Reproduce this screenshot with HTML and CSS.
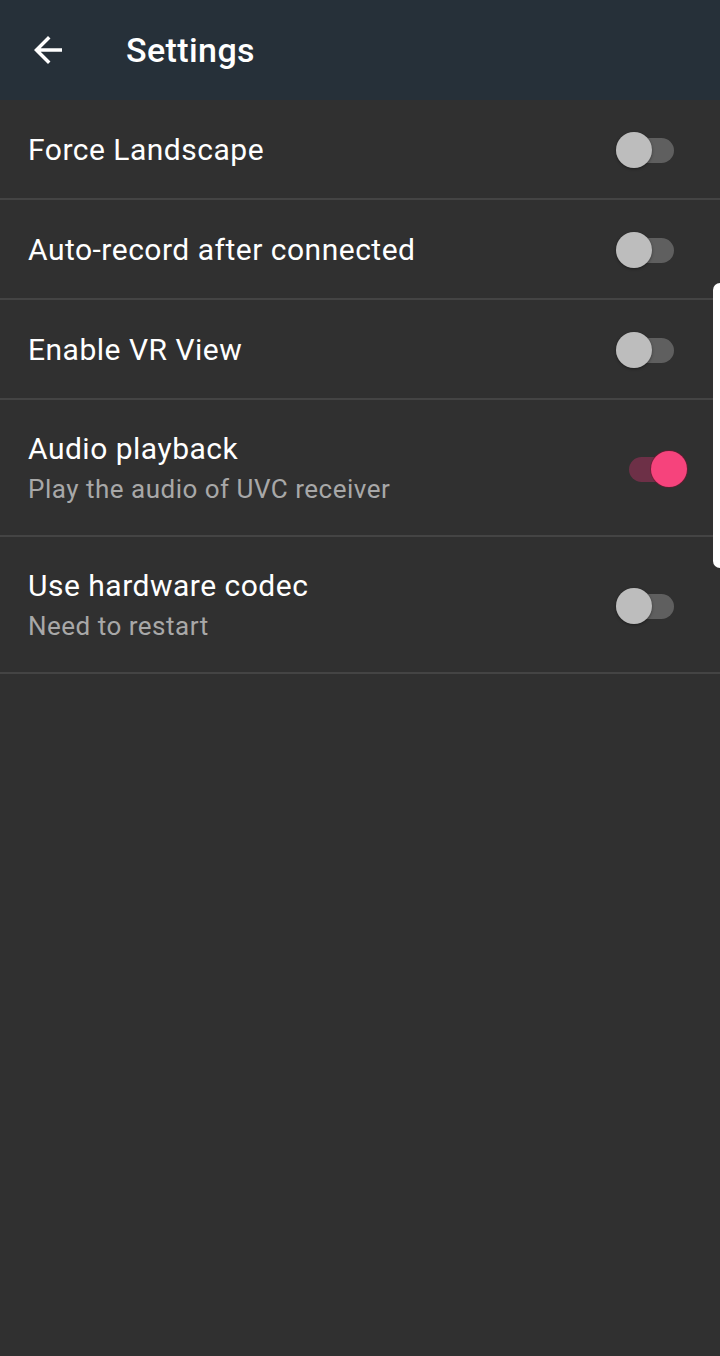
FILE: index.html
```html
<!DOCTYPE html>
<html lang="en">
<head>
    <meta charset="UTF-8">
    <meta name="viewport" content="width=device-width, initial-scale=1.0">
    <title>Settings</title>
    <link rel="stylesheet" href="styles.css">
</head>
<body>
    <header class="toolbar">
        <button class="back" aria-label="Back">
            <svg viewBox="0 0 24 24" width="42" height="42">
                <path d="M20 11H7.83l5.59-5.59L12 4l-8 8 8 8 1.41-1.41L7.83 13H20v-2z" fill="#fff"/>
            </svg>
        </button>
        <h1 class="title">Settings</h1>
    </header>

    <ul class="prefs">
        <li class="pref">
            <div class="text"><div class="label">Force Landscape</div></div>
            <span class="switch"><span class="track"></span><span class="thumb"></span></span>
        </li>
        <li class="pref">
            <div class="text"><div class="label">Auto-record after connected</div></div>
            <span class="switch"><span class="track"></span><span class="thumb"></span></span>
        </li>
        <li class="pref">
            <div class="text"><div class="label">Enable VR View</div></div>
            <span class="switch"><span class="track"></span><span class="thumb"></span></span>
        </li>
        <li class="pref tall">
            <div class="text">
                <div class="label">Audio playback</div>
                <div class="summary">Play the audio of UVC receiver</div>
            </div>
            <span class="switch on"><span class="track"></span><span class="thumb"></span></span>
        </li>
        <li class="pref tall">
            <div class="text">
                <div class="label">Use hardware codec</div>
                <div class="summary">Need to restart</div>
            </div>
            <span class="switch"><span class="track"></span><span class="thumb"></span></span>
        </li>
    </ul>

    <!-- edge panel handle -->
    <div class="edge-handle"></div>
</body>
</html>
```

FILE: styles.css
```css
html, body {
    margin: 0;
    padding: 0;
    height: 100%;
}

body {
    background-color: #303030;
    font-family: Roboto, "Noto Sans", Arial, sans-serif;
    color: #fff;
    position: relative;
    overflow: hidden;
}

.toolbar {
    height: 100px;
    background-color: #263039;
    display: flex;
    align-items: center;
}

.back {
    background: none;
    border: none;
    padding: 0;
    margin-left: 27px;
    width: 42px;
    height: 42px;
    display: flex;
    cursor: pointer;
}

.title {
    margin: 0 0 0 57px;
    font-size: 34px;
    font-weight: 500;
    letter-spacing: 0.4px;
}

.prefs {
    list-style: none;
    margin: 0;
    padding: 0;
}

.pref {
    height: 96px;
    border-bottom: 2px solid #444;
    display: flex;
    align-items: center;
    padding: 2px 0 0 28px;
}

.pref.tall {
    height: 133px;
}

.text {
    flex: 1;
}

.label {
    font-size: 30px;
    line-height: 40px;
    letter-spacing: 0.5px;
}

.summary {
    font-size: 26px;
    line-height: 40px;
    letter-spacing: 0.5px;
    color: #a8a8a8;
}

.switch {
    position: relative;
    width: 58px;
    height: 36px;
    margin-right: 46px;
}

.switch .track {
    position: absolute;
    left: 0;
    right: 0;
    top: 6px;
    height: 25px;
    border-radius: 13px;
    background-color: #5f5f5f;
}

.switch .thumb {
    position: absolute;
    left: 0;
    top: 0;
    width: 36px;
    height: 36px;
    border-radius: 50%;
    background-color: #bdbdbd;
    box-shadow: 0 1px 3px rgba(0, 0, 0, 0.4);
}

.switch.on {
    margin-right: 33px;
}

.switch.on .track {
    right: 6px;
    background-color: #6d3047;
}

.switch.on .thumb {
    left: auto;
    right: 0;
    background-color: #f6437c;
    box-shadow: 0 0 0 1px rgba(120, 20, 50, 0.6);
}

.edge-handle {
    position: absolute;
    right: 0;
    top: 283px;
    width: 7px;
    height: 285px;
    background-color: #fff;
    border-radius: 8px 0 0 8px;
}
```
